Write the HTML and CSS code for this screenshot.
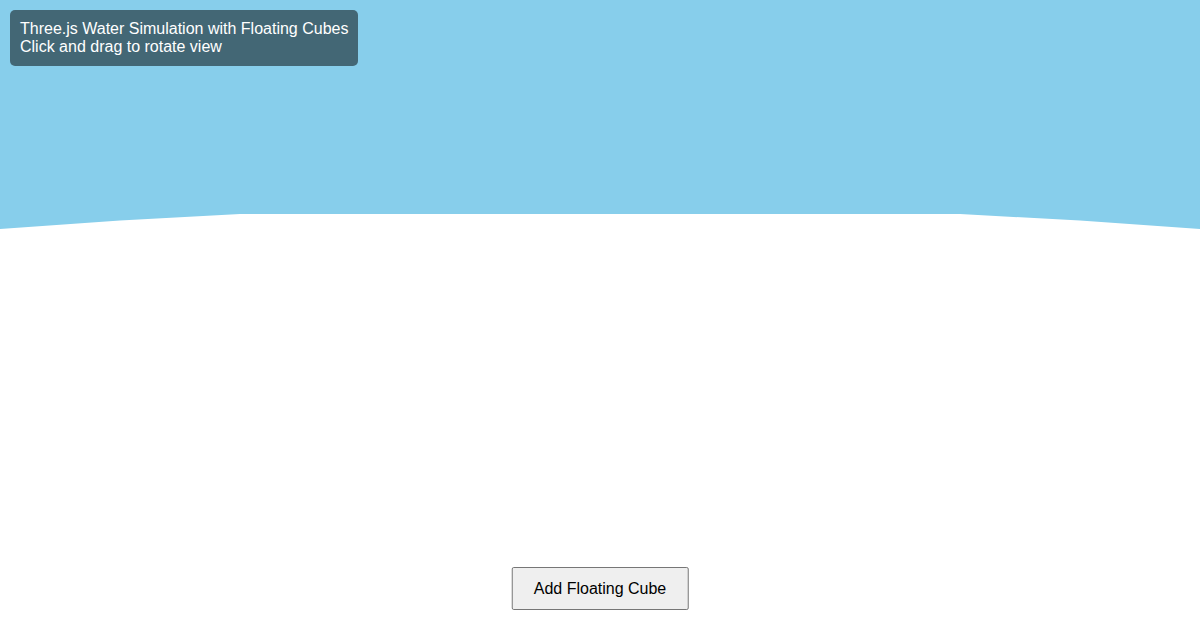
FILE: index.html
```html
<!DOCTYPE html>
<html>
    <head>
        <meta charset="utf-8">
        <title>Three.js Water Simulation</title>
        <link rel="stylesheet" href="styles.css">
    </head>
    <body>
        <div class="scene">
            <!-- sky over the water plane -->
            <svg class="view" width="1200" height="630" viewBox="0 0 1200 630">
                <rect x="0" y="0" width="1200" height="630" fill="#ffffff"/>
                <path d="M0 0 H1200 V229 L1080 220.5 L960 214 H240 L120 220.5 L0 229 Z" fill="#87ceeb"/>
            </svg>
        </div>
        <div class="info">
            Three.js Water Simulation with Floating Cubes<br>
            Click and drag to rotate view
        </div>
        <button class="add-cube">Add Floating Cube</button>
    </body>
</html>
```
FILE: styles.css
```css
body{
    margin: 0;
    overflow: hidden;
    font-family: "Liberation Sans", Arial, sans-serif;
}
.scene{
    width: 100vw;
    height: 100vh;
}
.view{
    display: block;
    width: 100%;
    height: 100%;
}
.info{                                  /*왼쪽 위 안내 상자*/
    position: absolute;
    top: 10px;
    left: 10px;
    padding: 10px;
    background-color: rgba(0,0,0,0.5);
    color: white;
    font-size: 16px;
    line-height: 18px;
    border-radius: 5px;
}
.add-cube{
    position: absolute;
    bottom: 20px;
    left: 50%;
    transform: translateX(-50%);
    padding: 11px 21px;
    font-family: "Liberation Sans", Arial, sans-serif;
    font-size: 16px;
    line-height: 19px;
    color: black;
    background-color: #efefef;
    border: 1px solid #767676;
    border-radius: 2px;
    cursor: pointer;
}
```
